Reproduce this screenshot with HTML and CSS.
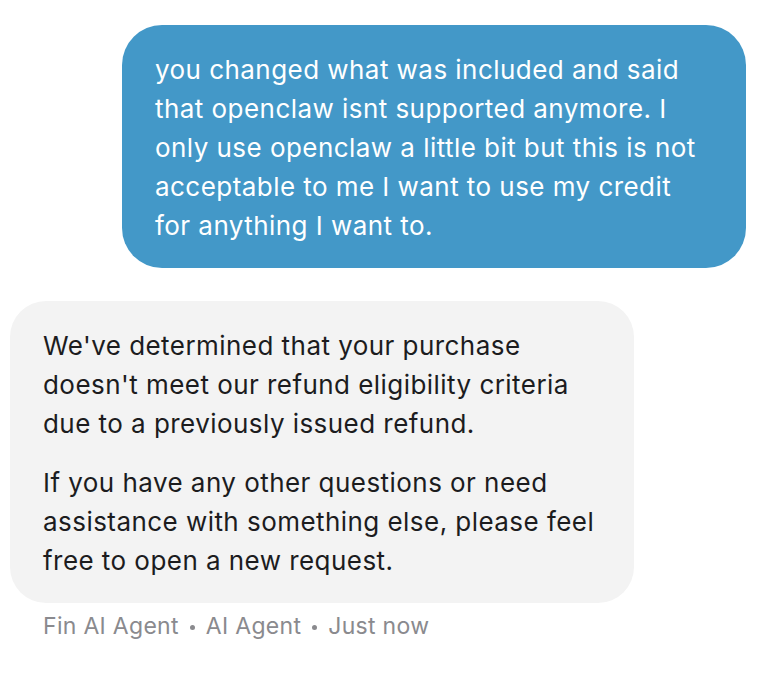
FILE: index.html
```html
<!DOCTYPE html>
<html>
<head>
<meta charset="utf-8">
<link rel="stylesheet" href="styles.css">
</head>
<body>
<div class="chat">
  <div class="row row-user">
    <div class="bubble bubble-user">
      <p>you changed what was included and said that openclaw isnt supported anymore. I only use openclaw a little bit but this is not acceptable to me I want to use my credit for anything I want to.</p>
    </div>
  </div>
  <div class="row row-agent">
    <div class="bubble bubble-agent">
      <p>We've determined that your purchase doesn't meet our refund eligibility criteria due to a previously issued refund.</p>
      <p>If you have any other questions or need assistance with something else, please feel free to open a new request.</p>
    </div>
    <div class="meta"><span>Fin AI Agent</span><span class="dot"></span><span>AI Agent</span><span class="dot"></span><span>Just now</span></div>
  </div>
</div>
</body>
</html>
```

FILE: styles.css
```css
html, body {
  margin: 0;
  padding: 0;
  background: #ffffff;
}
body {
  font-family: Inter, "Noto Sans", "Liberation Sans", sans-serif;
  -webkit-font-smoothing: antialiased;
}
.chat {
  width: 766px;
  padding-top: 25px;
  display: flex;
  flex-direction: column;
  gap: 33px;
}
.row {
  display: flex;
  flex-direction: column;
}
.row-user {
  align-items: flex-end;
  padding-right: 20px;
}
.row-agent {
  align-items: flex-start;
  padding-left: 10px;
}
.bubble {
  width: 624px;
  box-sizing: border-box;
  font-size: 26px;
  letter-spacing: 0.45px;
  line-height: 39px;
  padding: 25px 33px 23px 33px;
}
.bubble p {
  margin: 0;
}
.bubble p + p {
  margin-top: 20px;
}
.bubble-user {
  background: #4398c8;
  color: #ffffff;
  border-radius: 40px;
}
.bubble-agent {
  background: #f3f3f3;
  color: #1c1c1e;
  border-radius: 36px;
  padding-right: 30px;
}
.meta {
  margin-top: 10px;
  padding-left: 33px;
  font-size: 23px;
  letter-spacing: 0.3px;
  line-height: 26px;
  color: #8a8a8e;
  display: flex;
  align-items: center;
}
.dot {
  width: 5px;
  height: 5px;
  border-radius: 50%;
  background: #8a8a8e;
  margin: 2px 11px 0 11px;
}
```
